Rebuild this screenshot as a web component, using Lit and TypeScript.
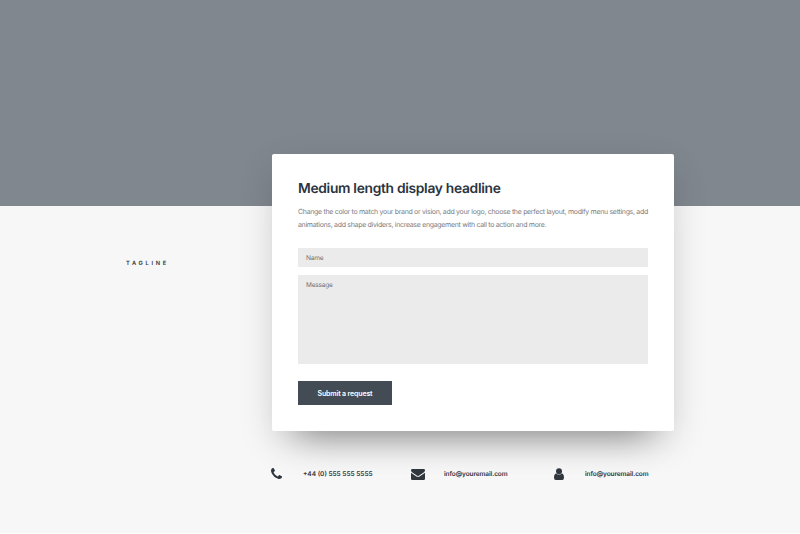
import { LitElement, html, css, svg } from "lit";
import { customElement } from "lit/decorators.js";

const phone = svg`<path d="M1408 1112q0 27-10 70.5t-21 68.5q-21 50-122 106-94 51-186 51-27 0-53-3.500t-57-12.500-47-14.500-55.500-20.500-49.500-18q-98-35-175-83-127-79-264-216t-216-264q-48-77-83-175-3-9-18-49.500t-20.500-55.500-14.500-47-12.500-57-3.500-53q0-92 51-186 56-101 106-122 25-11 68.500-21t70.500-10q14 0 21 3 18 6 53 76 11 19 30 54t35 63.500 31 53.500q3 4 17.500 25t21.500 35.500 7 28.500q0 20-28.500 50t-62 55-62 53-28.500 46q0 9 5 22.500t8.500 20.500 14 24 11.500 19q76 137 174 235t235 174q2 1 19 11.500t24 14 20.500 8.500 22.500 5q18 0 46-28.500t53-62 55-62 50-28.500q14 0 28.500 7t35.500 21.500 25 17.500q25 15 53.500 31t63.500 35 54 30q70 35 76 53 3 7 3 21z"/>`;
const envelope = svg`<path d="M1.300 0h11.400Q14 0 14 1.300C14 2.200 13.300 3 12.600 3.500L8.600 6.300Q7 7.500 5.400 6.300L1.400 3.500C.7 3 0 2.200 0 1.300Q0 0 1.300 0zM0 3.700L4.700 7Q7 8.700 9.300 7L14 3.700V9.700Q14 11 12.700 11H1.300Q0 11 0 9.700z"/>`;
const user = svg`<circle cx="5" cy="3.200" r="3"/><path d="M2.300 5.400Q5 7.800 7.700 5.400Q10 5.600 10 9.800Q10 12 8.200 12H1.800Q0 12 0 9.800Q0 5.600 2.300 5.400z"/>`;

@customElement("app-root")
export class AppRoot extends LitElement {
  static styles = css`
    :host {
      display: block;
      height: 534px;
      overflow: hidden;
      box-sizing: border-box;
      background: linear-gradient(#81878e 206px, #f7f7f7 206px, #f7f7f7 533px, #fff 533px);
      font-family: Inter, "Liberation Sans", sans-serif;
      text-rendering: geometricPrecision;
      color: #2b343e;
    }
    .page {
      display: grid;
      grid-template-columns: 146px 402px;
      padding: 154px 0 0 126px;
    }
    .tagline {
      padding-top: 104px;
      font-size: 5.700px;
      line-height: 11px;
      font-weight: 600;
      letter-spacing: 2.700px;
    }
    .card {
      box-sizing: border-box;
      height: 277px;
      padding: 24px 26px 0;
      background: #fff;
      border-radius: 2px;
      box-shadow: 0 32px 32px -28px rgba(0, 0, 0, 0.36), 0 12px 34px -2px rgba(0, 0, 0, 0.16);
    }
    h1 {
      margin: 0;
      font-size: 13.800px;
      line-height: 22px;
      font-weight: 600;
      letter-spacing: -0.300px;
      white-space: nowrap;
    }
    p {
      margin: 5px 0 0;
      font-size: 7px;
      line-height: 13px;
      letter-spacing: -0.310px;
      color: #7c7d80;
      white-space: nowrap;
    }
    .field {
      box-sizing: border-box;
      height: 19px;
      padding: 5px 8px;
      background: #ebebeb;
      color: #707072;
      font-size: 6.500px;
      line-height: 11px;
      letter-spacing: -0.200px;
    }
    .name { margin-top: 17px; }
    .message { height: 89px; margin-top: 8px; }
    .submit {
      display: block;
      width: 94px;
      height: 24px;
      margin-top: 17px;
      padding: 1px 0 0;
      border: 0;
      background: #434c54;
      color: #fff;
      font: 600 7px/23px Inter, "Liberation Sans", sans-serif;
      letter-spacing: -0.150px;
      text-align: center;
    }
    .contacts {
      grid-column: 2;
      display: grid;
      grid-template-columns: 141px 141px 120px;
      margin-top: 35px;
      height: 14px;
    }
    .contact {
      display: grid;
      grid-template-columns: 31px auto;
      align-items: center;
      font-size: 6.500px;
      line-height: 14px;
      font-weight: 600;
      white-space: nowrap;
    }
    .contact span { padding-top: 1px; }
    .email { letter-spacing: -0.090px; }
    svg { display: block; fill: #30363e; }
    .phone { width: 11px; height: 11px; margin-left: -1px; }
    .mail { width: 14px; height: 11px; margin: 1px 0 0 -2px; }
    .user { width: 10px; height: 12px; }
  `;

  render() {
    return html`
      <main class="page">
        <div class="tagline">TAGLINE</div>
        <section class="card">
          <h1>Medium length display headline</h1>
          <p>Change the color to match your brand or vision, add your logo, choose the perfect layout, modify menu settings, add<br />animations, add shape dividers, increase engagement with call to action and more.</p>
          <div class="field name">Name</div>
          <div class="field message">Message</div>
          <button class="submit">Submit a request</button>
        </section>
        <div class="contacts">
          <div class="contact"><svg class="phone" viewBox="0 0 1408 1408">${phone}</svg><span>+44 (0) 555 555 5555</span></div>
          <div class="contact"><svg class="mail" viewBox="0 0 14 11">${envelope}</svg><span class="email">info@youremail.com</span></div>
          <div class="contact"><svg class="user" viewBox="0 0 10 12">${user}</svg><span class="email">info@youremail.com</span></div>
        </div>
      </main>
    `;
  }
}
